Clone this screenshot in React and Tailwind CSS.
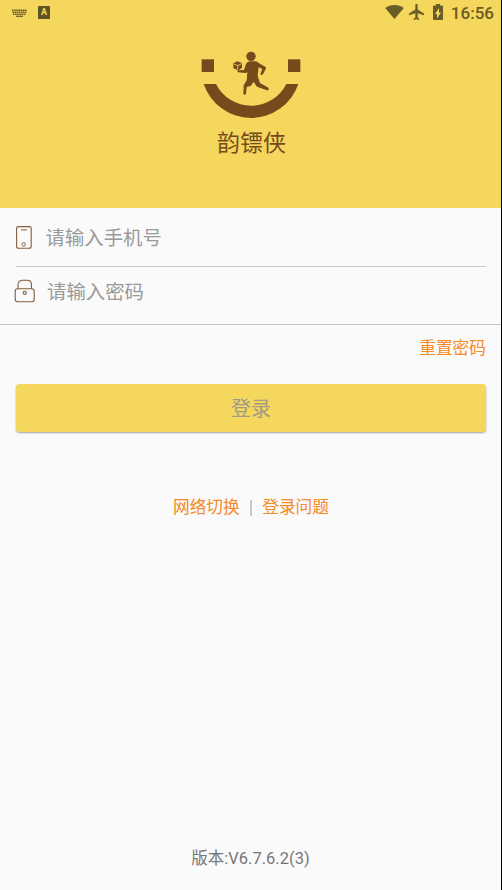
import React, { useState } from 'react';

const KeyboardIcon = () => (
  <svg className="h-2 w-[15px]" viewBox="0 0 15 8" fill="none" stroke="#6b5e27">
    <path d="M0 1.200h15M0.500 3.200h14M1 5.200h13" strokeWidth="1.500" strokeDasharray="1.600 0.500" />
    <path d="M4 7.300h7" strokeWidth="1.300" />
  </svg>
);

const InputMethodIcon = () => (
  <span className="flex h-[13px] w-3 items-center justify-center rounded-[1px] bg-[#5f5423] text-[9px] leading-none font-bold text-[#f5d75e]">
    A
  </span>
);

const WifiIcon = () => (
  <svg className="h-[14px] w-[19px]" viewBox="0 0 19 14" fill="#695c27">
    <path d="M9.500 14 0.200 3.100C2.800 1.100 6 0 9.500 0s6.700 1.100 9.300 3.100z" />
  </svg>
);

const PlaneIcon = () => (
  <svg className="h-4 w-[15px]" viewBox="2 2 19 20" preserveAspectRatio="none" fill="#695c27">
    <path d="M21 16v-2l-8-5V3.500c0-.83-.67-1.500-1.500-1.500S10 2.670 10 3.500V9l-8 5v2l8-2.500V19l-2 1.500V22l3.500-1 3.500 1v-1.500L13 19v-5.500l8 2.500z" />
  </svg>
);

const BatteryIcon = () => (
  <svg className="h-4 w-[10px]" viewBox="7 2 10 20" preserveAspectRatio="none" fill="#695c27">
    <path d="M15.670 4H14V2h-4v2H8.330C7.600 4 7 4.600 7 5.330v15.330C7 21.400 7.600 22 8.330 22h7.330c.74 0 1.340-.6 1.340-1.330V5.330C17 4.600 16.400 4 15.670 4zM11 20v-5.500H9L13 7v5.500h2L11 20z" />
  </svg>
);

const StatusBar = () => (
  <div className="flex h-[26px] items-center pr-[7px] pb-px pl-3 font-['Roboto',sans-serif]">
    <KeyboardIcon />
    <div className="ml-[11px]">
      <InputMethodIcon />
    </div>
    <div className="ml-auto flex items-center">
      <div className="flex items-center pb-px">
        <WifiIcon />
        <div className="ml-[5px]">
          <PlaneIcon />
        </div>
        <div className="ml-[9px]">
          <BatteryIcon />
        </div>
      </div>
      <span className="ml-[8px] pt-px text-[17px] leading-6 font-medium text-[#695c27]">16:56</span>
    </div>
  </div>
);

// Smiling face with a courier running between the eyes
const Logo = () => (
  <svg className="h-[85px] w-[122px]" viewBox="0 0 366 255" fill="#754b1c">
    <rect x="35" y="58" width="37" height="38" />
    <rect x="294" y="58" width="37" height="38" />
    <path d="M41 132H78A118 118 0 0 0 289 132H325A150 150 0 0 1 41 132Z" />
    <circle cx="183" cy="49" r="14" />
    <path d="M172 67Q176 64 182 64H196Q203 64 207 70L226 80Q230 83 227 87L219 103Q214 107 211 102L217 87L206 82L203 108L210 129L233 142Q238 145 235 150Q233 152 229 150L201 140L191 126L182 138L170 141L168 162Q164 166 160 162L161 136L170 121L172 96Q170 99 166 99L145 97Q140 95 143 91L162 90L168 72Z" />
    <path d="M130 70 142 64 156 69V84L145 91L130 85Z" />
    <path d="M132 72 143 77 155 71M143 77V88" fill="none" stroke="#f5d75e" strokeWidth="2.500" />
  </svg>
);

const PhoneIcon = () => (
  <svg className="h-[23px] w-4" viewBox="0 0 16 23" fill="none" stroke="#835c39">
    <rect x="0.600" y="0.600" width="14.600" height="21.600" rx="2" strokeWidth="1.100" />
    <path d="M5 3.900h6" />
    <circle cx="7.700" cy="18.400" r="1.700" />
  </svg>
);

const LockIcon = () => (
  <svg className="h-6 w-[21px]" viewBox="0 0 21 24" fill="none" stroke="#835c39" strokeWidth="1.100">
    <rect x="1.200" y="9.800" width="19" height="13" rx="2.500" />
    <path d="M4 9.800V6C4 2.500 6 1.200 8.500 1.200h4.500C15.500 1.200 17.500 2.500 17.500 6v3.800" />
    <circle cx="10.800" cy="13.800" r="1.600" />
  </svg>
);

const App = () => {
  const [phone, setPhone] = useState('');
  const [password, setPassword] = useState('');

  return (
    <div className="h-[890px] w-[502px] overflow-hidden border-r border-black bg-[#fafafa] font-['Roboto','Noto_Sans_CJK_SC',sans-serif]">
      <form className="flex h-full flex-col" onSubmit={(e) => e.preventDefault()}>
        <header className="h-[208px] shrink-0 bg-[#f5d75e]">
          <StatusBar />
          <div className="flex flex-col items-center pt-[14px]">
            <Logo />
            <h1 className="mt-[2px] pl-[2px] text-[23px] leading-[34px] text-[#754b1c]">韵镖侠</h1>
          </div>
        </header>

        <div className="mr-[15px] ml-4 flex h-[59px] shrink-0 items-center border-b border-[#c9c9c9]">
          <PhoneIcon />
          <input
            type="tel"
            value={phone}
            onChange={(e) => setPhone(e.target.value)}
            placeholder="请输入手机号"
            className="ml-[13.500px] h-8 flex-1 bg-transparent pt-[2px] text-[19.400px] outline-none placeholder:text-[#999]"
          />
        </div>
        <div className="flex h-[58px] shrink-0 items-center border-b border-[#c4c4c4] pr-[15px] pb-[9px] pl-[14px]">
          <LockIcon />
          <input
            type="password"
            value={password}
            onChange={(e) => setPassword(e.target.value)}
            placeholder="请输入密码"
            className="ml-3 h-8 flex-1 bg-transparent pt-[2px] text-[19.400px] outline-none placeholder:text-[#999]"
          />
        </div>

        <button type="button" className="mt-3 mr-[15px] self-end text-[16.700px] leading-6 text-[#f58a26]">
          重置密码
        </button>

        <button
          type="submit"
          className="mt-[23px] mr-[15px] ml-4 h-12 shrink-0 rounded-[4px] bg-[#f5d75e] pt-[2px] text-[20px] text-[#a19a86] shadow-[0_1px_2px_rgba(0,0,0,0.35)]"
        >
          登录
        </button>

        <div className="mt-[64px] flex items-center justify-center pl-px text-[16.700px] leading-6 text-[#f58a26]">
          <button type="button">网络切换</button>
          <span className="mr-[10.500px] mb-px ml-[10px] h-4 w-[2px] bg-[#c8c8c8]" />
          <button type="button">登录问题</button>
        </div>

        <p className="mt-auto mb-[19px] text-center text-[16.500px] leading-6 text-[#777]">版本:V6.7.6.2(3)</p>
      </form>
    </div>
  );
};

export default App;
